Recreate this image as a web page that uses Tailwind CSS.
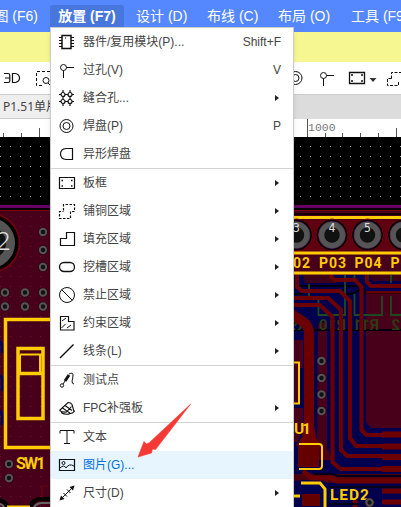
<!DOCTYPE html>
<html lang="zh-CN">
<head>
<meta charset="utf-8">
<title>PCB</title>
<script src="https://cdn.jsdelivr.net/npm/@tailwindcss/browser@4"></script>
</head>
<body class="relative h-[507px] w-[401px] overflow-hidden bg-black font-['Liberation_Sans','Noto_Sans_CJK_SC',sans-serif]">
<main class="flex h-full flex-col">
  <nav class="flex h-8 shrink-0 items-center bg-[#5588ff] text-[14px] whitespace-nowrap text-white">
    <div class="flex w-[50px] shrink-0 justify-end pr-3">图 (F6)</div>
    <div class="mt-[5px] flex h-[27px] w-[74px] shrink-0 items-center justify-center self-start rounded-[3px] bg-[#4777dc] pb-[5px] text-[14px] font-bold">放置 (F7)</div>
    <div class="w-[71px] shrink-0 pl-3">设计 (D)</div>
    <div class="w-[71px] shrink-0 pl-3">布线 (C)</div>
    <div class="w-[73px] shrink-0 pl-3">布局 (O)</div>
    <div class="shrink-0 pl-3">工具 (F9)</div>
  </nav>
  <div class="h-[30px] shrink-0 bg-[#f6f790]"></div>
  <div class="h-8 shrink-0 bg-white">
    <svg class="block h-8 w-[401px]" viewBox="0 62 401 32" fill="none" stroke="#111">
      <path d="M4 73.500h4q1.800 0 1.800 1.800v5.400q0 1.800-1.800 1.800H4M5 78h4.500M12.500 73.500v9h3q4-1 4-4.500t-4-4.500z" stroke-width="1.200"/>
      <path d="M50 71.500H36.500v14H42" stroke-dasharray="3 2"/><circle cx="46" cy="80.500" r="3"/><path d="M48 83l3 3"/>
      <circle cx="295.500" cy="78" r="6.500"/><circle cx="295.500" cy="78" r="3.500"/>
      <circle cx="323.500" cy="75.500" r="3"/><path d="M326.500 75.500H334M323.500 78.500V86"/>
      <path d="M349.500 72.500h15v11h-15z" stroke-width="1.300"/><path d="M351 75h2m8 0h2m-12 6h2m8 0h2" stroke-width="1.500"/>
      <path d="M369.500 78h7l-3.500 4z" fill="#333" stroke="none"/>
      <path d="M391.500 78.500v-6h10M391.500 78.500h-4v7h11v-5" stroke-dasharray="3 1.500"/>
    </svg>
  </div>
  <div class="flex h-[25px] shrink-0 border-t border-[#ccc] bg-[#dcdcdc]">
    <div class="flex w-[51px] items-center overflow-hidden border-b border-[#ccc] bg-[#eee] pl-[3px] font-['Noto_Sans','Noto_Sans_CJK_SC',sans-serif] text-[12px] whitespace-nowrap text-[#444]">P1.51单片机</div>
  </div>
  <div class="h-[18px] shrink-0 bg-white">
    <svg class="block h-[18px] w-[401px]" viewBox="0 119 401 18" stroke="#555">
      <path d="M3.500 133v4M21.500 133v4M39.500 128v9M307.500 119v18M325.500 133v4M342.500 133v4M360.500 133v4M378.500 133v4M396.500 128v9"/>
      <text x="308" y="131" font-family="Liberation Mono" font-size="11.500" fill="#777" stroke="none">1000</text>
    </svg>
  </div>
  <svg class="block h-[370px] w-[401px] shrink-0" viewBox="0 137 401 370" fill="none">
    <defs>
      <pattern id="grid" x="0" y="146" width="10" height="10" patternUnits="userSpaceOnUse"><rect width="1" height="1" fill="#aaa"/></pattern>
      <g id="via"><circle r="4.800" fill="#300014"/><circle r="3.200" fill="#111" stroke="#555" stroke-width="2"/></g>
      <g id="pad"><circle r="16" fill="#000" stroke="#74000d"/><circle r="13.500" stroke="#5a145a"/><circle r="10.500" fill="#111" stroke="#555" stroke-width="5.500"/></g>
    </defs>
    <path fill="#000" d="M0 137h401v370H0z"/>
    <path fill="url(#grid)" d="M0 137h401v68H0z"/>
    <path fill="#48001a" d="M0 210h401v297H0z"/>
    <path fill="#660066" d="M0 205h401v3H0z"/>
    <path d="M0 210.500h401" stroke="#74000d"/>
    <path fill="url(#grid)" opacity=".18" d="M0 211h401v296H0z"/>
    <!-- left side -->
    <circle cx="-10" cy="243" r="29.500" fill="#180008" stroke="#74000d" stroke-width="1.500"/>
    <circle cx="-10" cy="243" r="27.500" fill="#000"/>
    <circle cx="-10" cy="243" r="20.500" fill="#111" stroke="#555" stroke-width="9"/>
    <text x="-4" y="250" font-family="Noto Sans" font-weight="300" font-size="26" fill="#ddd">2</text>
    <use href="#via" x="43" y="232"/><use href="#via" x="43" y="250"/><use href="#via" x="43" y="267"/>
    <use href="#via" x="5" y="292.500"/><use href="#via" x="25" y="292.500"/><use href="#via" x="43" y="292.500"/>
    <use href="#via" x="5" y="306.500"/><use href="#via" x="25" y="306.500"/><use href="#via" x="43" y="306.500"/>
    <use href="#via" x="9" y="464"/><use href="#via" x="9" y="478"/>
    <path d="M0 341q3 4 2 12M0 376q4 0 2 15M0 411q4 2 2 14" stroke="#000054" stroke-width="3"/>
    <g stroke="#ffcc00" stroke-width="3.500">
      <path d="M52 319.500H5.500V447.500H52"/>
      <path d="M18 348.500H43V418.500H18zM18 373.500H43"/>
    </g>
    <path d="M20 355v18M40 355v18M20 354.500h22" stroke="#ffcc00" stroke-width="2"/>
    <text x="16" y="468.500" textLength="29.500" font-family="Roboto" font-weight="bold" font-size="16" fill="#ffcc00">SW1</text>
    <path d="M0 500q6 2 7 7M30 507q3-8 11-8h10" stroke="#000" stroke-width="4"/>
    <path d="M0 504q3 1 4 3M34 507q3-4 8-4h9" stroke="#666" stroke-width="2"/>
    <path d="M42 498v-12h6" stroke="#74000d"/><path d="M7 506.500h23" stroke="#ffcc00" stroke-width="2"/>
    <!-- right side: header row -->
    <path d="M293 214h108" stroke="#000" stroke-width="1.500"/><path fill="#600010" d="M293 220h108v31H293z"/>
    <path d="M293 217.500h108" stroke="#ffcc00" stroke-width="3"/>
    <use href="#pad" x="296.500" y="235"/><use href="#pad" x="332" y="235"/><use href="#pad" x="367.500" y="235"/><use href="#pad" x="403.500" y="235"/>
    <g font-family="DejaVu Sans Mono" font-size="11.500" fill="#ddd"><text x="293" y="232">3</text><text x="328.500" y="232">4</text><text x="364" y="232">5</text></g>
    <!-- copper -->
    <path fill="#00004e" d="M293 275h108v232H293z"/>
    <path fill="#3c0018" d="M303 275h29l5 8h-32zM370 275h31v6h-28z"/>
    <path fill="#48001a" d="M366 291h35v137h-30l-5-6z"/>
    <path fill="#48001a" d="M318 325q5-6 9 0v123l6 12h-16zM293 340h10v28h-3v36h-7zM293 408h10v14l-5 20h-5z"/>
    <path fill="#4c0010" d="M293 474h108v9H327l-8-4-26 2z"/>
    <path d="M299 286h65M337 293l15 1 9-5 5 4h35M293 294h10M293 330h108" stroke="#00000c" stroke-width="2"/>
    <path d="M309 284v12M318.500 300v15H345V275M354.500 275v7M354.500 294v21H382V296M391 275v8M391 296v19h10" stroke="#1d4a20" stroke-width="1.800"/>
    <g font-family="Roboto" font-size="15" font-weight="bold" fill="#2d3a13">
      <text transform="translate(379 330) scale(-1 1)" textLength="26">R11</text><text transform="translate(346 330) scale(-1 1)" textLength="27">R10</text><text transform="translate(400 330) scale(-1 1)">2</text><text transform="translate(307 330) scale(-1 1)">R9</text>
    </g>
    <g stroke="#6c0000" stroke-width="4">
      <path d="M331 251v26l4 3h20l6.500 7v143l5 5H401"/>
      <path d="M297 251v36l5 4h38l10 10v137l6 8h45"/>
      <path d="M293 298h35l13 12v140l6 6h54"/>
      <path d="M293 305h27l12.500 12v145l8 7h61"/>
      <path d="M367 251v31l4 4h30"/>
      <path d="M366 292.500h35" stroke-width="2"/>
      <path d="M291 314l11 7q7 4 7 13v107" stroke-width="10"/>
      <path fill="#6c0000" stroke="none" d="M304 425h10l2 13 5 8h-25l6-9z"/>
      <path d="M303 471l9 7h20l5 3h64M355 507v-7M382 491h19M382 502h19" stroke-width="5"/>
      <path d="M382 434.500h19M382 446.500h19M382 457h19M382 469h19" stroke-width="6"/>
    </g>
    <path d="M314 474h18l7 2h62M329 487h72M329 504h30" stroke="#000018" stroke-width="2"/>
    <path fill="#48001a" d="M293 255h108v16H293z"/>
    <path d="M293 253h108M293 273h108" stroke="#ffcc00" stroke-width="3"/>
    <g font-family="Roboto" font-weight="bold" font-size="14" fill="#ffcc00">
      <text x="283" y="268" textLength="27">P02</text><text x="319" y="268" textLength="27">P03</text><text x="354.500" y="268" textLength="27">P04</text><text x="390.500" y="268" textLength="27">P05</text>
      <text x="294" y="433.500" font-size="15.500" textLength="17">U1</text><text x="330" y="500" font-size="15.500" textLength="39">LED2</text>
    </g>
    <use href="#via" x="321.500" y="361"/><use href="#via" x="321.500" y="378"/><use href="#via" x="321.500" y="394.500"/><use href="#via" x="321.500" y="411"/><use href="#via" x="369.500" y="502.500"/>
    <path fill="#640000" d="M298 446h21v21h-21zM302 494h18v12h-18z"/>
    <g stroke="#ffcc00" stroke-width="2"><path d="M293 362.500h6v41h-6M299 444h20q3 0 3 3v19q0 3-3 3h-20"/><path d="M301 483h19l5 6v18M293 496h7" stroke-width="3"/></g>
  </svg>
</main>

<div class="absolute top-[27px] left-[50px] flex h-[490px] w-[244px] flex-col border border-[#ccc] bg-white text-[12px] text-[#444] shadow-md">
  <ul id="menu" class="flex flex-col"></ul>
</div>
<svg class="absolute top-[400px] left-[130px] h-[60px] w-[65px]" viewBox="130 400 65 60"><path fill="#f53a36" d="M190.700 404L155.500 449.500l-3-.5-1 4-13.500 4 6-15.500 2.500 2.500 3-1.500z" stroke="#f53a36" stroke-width=".6"/></svg>

<script>
const icons = {
  chip: '<path d="M4 2.500h9v13H4z" stroke-width="1.500"/><path d="M1 4.500h3M1 7.500h3M1 10.500h3M1 13.500h3M13 4.500h3M13 7.500h3M13 10.500h3M13 13.500h3M7 5h1"/>',
  via: '<circle cx="5.500" cy="6.500" r="3"/><path d="M8.500 6.500H16M5.500 9.500V17"/>',
  stitch: '<g stroke-width="1.200"><circle cx="5" cy="5.500" r="2"/><circle cx="12" cy="5.500" r="2"/><circle cx="5" cy="12.500" r="2"/><circle cx="12" cy="12.500" r="2"/><path d="M5 1v2.500M12 1v2.500M5 7.500v3M12 7.500v3M5 14.500V17M12 14.500V17M1 5.500h2M7 5.500h3M14 5.500h2M1 12.500h2M7 12.500h3M14 12.500h2"/></g>',
  pad: '<circle cx="8.500" cy="9" r="6.500"/><circle cx="8.500" cy="9" r="3.500"/>',
  shape: '<path d="M14.500 3.500H8Q2.500 4 2.500 9T8 14.500h6.500z" stroke-width="1.200"/>',
  board: '<path d="M1.500 3.500h15v11h-15z" stroke-width="1.200"/><path d="M3.500 6.500h1.500m8 0h1.500m-11 5.500h1.500m8 0h1.500" stroke-width="1.500"/>',
  copper: '<path d="M5.500 8.500v-6h11v7h-4v7h-11v-7h4" stroke-dasharray="2.500 1.500" stroke-width="1.200"/>',
  fill: '<path d="M2.500 15.500v-7h6v-6h8v13z" stroke-width="1.200"/>',
  slot: '<rect x="1.500" y="4.500" width="15" height="9" rx="4.500" stroke-width="1.300"/>',
  forbid: '<circle cx="9" cy="9" r="7.500"/><path d="M3.500 3.500l11 11"/>',
  limit: '<path d="M2.500 16V2.500h8v5h5.500V16z" stroke-width="1.200"/><path d="M4 7l4-3M3.500 14l4-4M9 14l4-3"/>',
  line: '<path d="M2 16L15.500 2.500" stroke-width="1.500"/>',
  probe: '<circle cx="4" cy="14.500" r="1.700"/><path d="M5 13l2-3"/><path d="M7 10l4-6" stroke-width="3"/><path d="M11 3q4-2 4 1t-1 6q0 3 2 3"/>',
  fpc: '<path d="M1.500 11.500L10 3.500q3 0 4 2l2 7M1.500 11.500q3 2 7 1.500l5-5.500M4.500 9l8 5.500q4-1 4-3M7 6.500l7 5M3 13.500q5 3 9 1" stroke-width="1.100"/>',
  text: '<path d="M2 5.500V2.500h14v3M9 2.500v13M6 15.500h6"/>',
  image: '<path d="M1.500 3.500h15v11h-15z" stroke-width="1.200"/><circle cx="5.500" cy="7" r="1.500"/><path d="M2 12q4-4 6 0 3-5 8-2"/>',
  size: '<path d="M3.500 14.500l11-11"/><path d="M16.500 1.500l-1.500 5-3.500-3.500zM1.500 16.500l1.500-5 3.500 3.500z" fill="#111" stroke="none"/><path d="M5.500 9l3.500 3.500M9 5.500L12.500 9"/>'
};
const items = [
  ['chip','器件/复用模块(P)...','Shift+F'],['via','过孔(V)','V'],['stitch','缝合孔...','>'],['pad','焊盘(P)','P'],['shape','异形焊盘',''],null,
  ['board','板框','>'],['copper','铺铜区域','>'],['fill','填充区域','>'],['slot','挖槽区域','>'],['forbid','禁止区域','>'],['limit','约束区域','>'],['line','线条(L)','>'],null,
  ['probe','测试点',''],['fpc','FPC补强板','>'],null,
  ['text','文本',''],['image','图片(G)...',''],['size','尺寸(D)','>']
];
document.getElementById('menu').innerHTML = items.map(i => {
  if (!i) return '<li class="h-px bg-[#d4d4d4]"></li>';
  const right = i[2] === '>' ? '<span class="mr-0.5 h-0 w-0 border-y-[3.5px] border-l-4 border-y-transparent border-l-[#222]"></span>' : '<span>' + i[2] + '</span>';
  return '<li class="flex h-7 items-center pr-3 pl-[7px] ' + (i[0] === 'image' ? 'bg-[#e6f5ff]' : '') + '"><svg class="h-[18px] w-[18px] shrink-0" viewBox="0 0 18 18" fill="none" stroke="#111">' + icons[i[0]] + '</svg><span class="ml-[7px] flex-1 leading-4 whitespace-nowrap ' + (i[0] === 'image' ? 'text-[#0070df]' : '') + '">' + i[1] + '</span>' + right + '</li>';
}).join('');
</script>
</body>
</html>
